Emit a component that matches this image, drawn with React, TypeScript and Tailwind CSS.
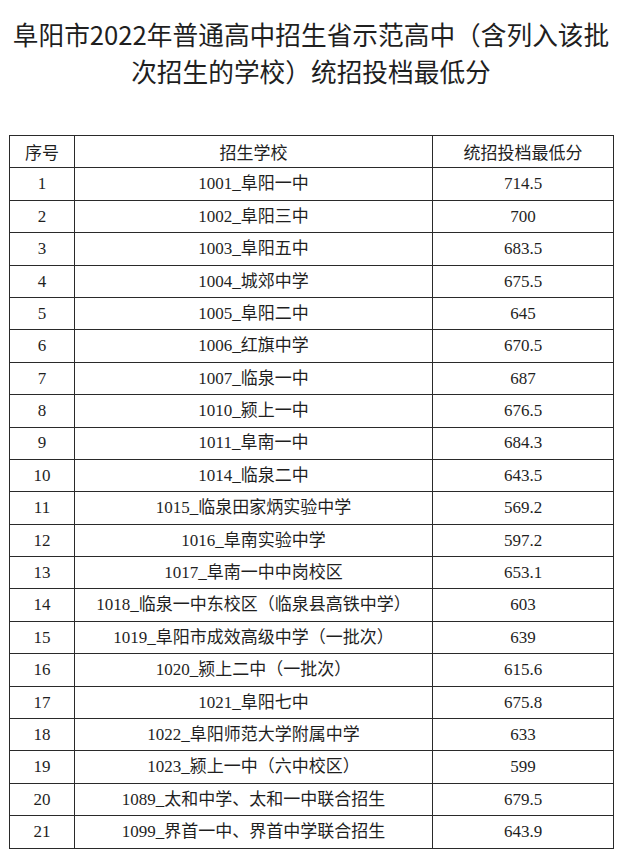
import React from "react";

const rows: [string, string, string][] = [
  ["1", "1001_阜阳一中", "714.5"],
  ["2", "1002_阜阳三中", "700"],
  ["3", "1003_阜阳五中", "683.5"],
  ["4", "1004_城郊中学", "675.5"],
  ["5", "1005_阜阳二中", "645"],
  ["6", "1006_红旗中学", "670.5"],
  ["7", "1007_临泉一中", "687"],
  ["8", "1010_颍上一中", "676.5"],
  ["9", "1011_阜南一中", "684.3"],
  ["10", "1014_临泉二中", "643.5"],
  ["11", "1015_临泉田家炳实验中学", "569.2"],
  ["12", "1016_阜南实验中学", "597.2"],
  ["13", "1017_阜南一中中岗校区", "653.1"],
  ["14", "1018_临泉一中东校区（临泉县高铁中学）", "603"],
  ["15", "1019_阜阳市成效高级中学（一批次）", "639"],
  ["16", "1020_颍上二中（一批次）", "615.6"],
  ["17", "1021_阜阳七中", "675.8"],
  ["18", "1022_阜阳师范大学附属中学", "633"],
  ["19", "1023_颍上一中（六中校区）", "599"],
  ["20", "1089_太和中学、太和一中联合招生", "679.5"],
  ["21", "1099_界首一中、界首中学联合招生", "643.9"],
];

export default function App() {
  return (
    <div className="w-[641px] h-[850px] bg-white overflow-hidden text-[#1f1f1f]">
      <div className="w-[622px] pt-[16px] text-center text-[25.7px] leading-[36.5px] font-['Noto_Sans_CJK_SC',sans-serif]">
        <div>阜阳市2022年普通高中招生省示范高中（含列入该批</div>
        <div>次招生的学校）统招投档最低分</div>
      </div>
      <table className="ml-[9px] mt-[46px] w-[604px] table-fixed border-collapse text-[17px] font-['Liberation_Serif','Noto_Sans_CJK_SC',serif]">
        <colgroup>
          <col className="w-[65px]" />
          <col className="w-[358px]" />
          <col className="w-[181px]" />
        </colgroup>
        <thead>
          <tr className="h-[32.4px]">
            <th className="border-[1.5px] border-[#2a2a2a] p-0 font-normal font-['Noto_Sans_CJK_SC',sans-serif]">序号</th>
            <th className="border-[1.5px] border-[#2a2a2a] p-0 font-normal font-['Noto_Sans_CJK_SC',sans-serif]">招生学校</th>
            <th className="border-[1.5px] border-[#2a2a2a] p-0 font-normal font-['Noto_Sans_CJK_SC',sans-serif]">统招投档最低分</th>
          </tr>
        </thead>
        <tbody>
          {rows.map((r) => (
            <tr key={r[0]} className="h-[32.4px]">
              <td className="border-[1.5px] border-[#2a2a2a] p-0 text-center">{r[0]}</td>
              <td className="border-[1.5px] border-[#2a2a2a] p-0 text-center">{r[1]}</td>
              <td className="border-[1.5px] border-[#2a2a2a] p-0 text-center">{r[2]}</td>
            </tr>
          ))}
        </tbody>
      </table>
    </div>
  );
}
